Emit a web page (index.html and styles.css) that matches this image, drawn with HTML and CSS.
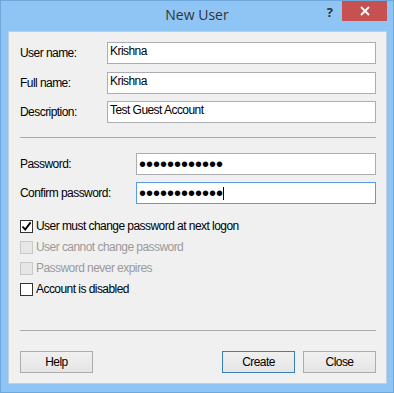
FILE: index.html
```html
<!DOCTYPE html>
<html>
<head>
<meta charset="utf-8">
<title>New User</title>
<link rel="stylesheet" href="styles.css">
</head>
<body>
<div class="window">
  <div class="titlebar">
    <div class="tb-spacer"></div>
    <div class="title">New User</div>
    <div class="controls">
      <span class="help-glyph">?</span>
      <span class="close-btn">
        <svg width="10" height="10" viewBox="0 0 10 10"><path d="M1 1 L9 9 M9 1 L1 9" stroke="#fff" stroke-width="1.8" fill="none"/></svg>
      </span>
    </div>
  </div>
  <div class="client">
    <div class="fields">
      <div class="row row-first">
        <span class="label">User name:</span>
        <div class="input">Krishna</div>
      </div>
      <div class="row">
        <span class="label">Full name:</span>
        <div class="input">Krishna</div>
      </div>
      <div class="row">
        <span class="label">Description:</span>
        <div class="input">Test Guest Account</div>
      </div>
    </div>
    <div class="sep sep-top"></div>
    <div class="pw-fields">
      <div class="row pw-row">
        <span class="label">Password:</span>
        <div class="input pw-input"><span class="dots">••••••••••••</span></div>
      </div>
      <div class="row pw-row">
        <span class="label">Confirm password:</span>
        <div class="input pw-input focused"><span class="dots">••••••••••••</span><span class="caret"></span></div>
      </div>
    </div>
    <div class="checks">
      <div class="check">
        <span class="box checked">
          <svg width="11" height="11" viewBox="0 0 11 11"><path d="M1.5 5.5 L4.2 8.6 L9.6 1.4" stroke="#000" stroke-width="1.9" fill="none"/></svg>
        </span>
        <span class="check-label">User must change password at next logon</span>
      </div>
      <div class="check disabled">
        <span class="box"></span>
        <span class="check-label">User cannot change password</span>
      </div>
      <div class="check disabled">
        <span class="box"></span>
        <span class="check-label">Password never expires</span>
      </div>
      <div class="check">
        <span class="box"></span>
        <span class="check-label">Account is disabled</span>
      </div>
    </div>
    <div class="sep sep-bottom"></div>
    <div class="buttons">
      <button class="btn">Help</button>
      <span class="btn-spacer"></span>
      <button class="btn default">Create</button>
      <button class="btn">Close</button>
    </div>
  </div>
</div>
</body>
</html>
```
FILE: styles.css
```css
html, body {
  margin: 0;
  padding: 0;
}
body {
  width: 394px;
  height: 393px;
  background: #8ec5f5;
  font-family: "Liberation Sans Narrow", "Arial Narrow", "Liberation Sans", Arial, sans-serif;
  font-size: 12px;
  letter-spacing: -0.55px;
  color: #000;
  overflow: hidden;
}
.window {
  box-sizing: border-box;
  width: 394px;
  height: 393px;
  border: 1px solid #6fa8dc;
  background: #8ec5f5;
  display: flex;
  flex-direction: column;
}
.titlebar {
  height: 30px;
  display: grid;
  grid-template-columns: 1fr auto 1fr;
  align-items: start;
  letter-spacing: 0;
}
.title {
  font-family: "Open Sans", "Noto Sans", sans-serif;
  font-size: 14px;
  line-height: 28px;
  color: #333;
}
.controls {
  justify-self: end;
  display: flex;
  align-items: flex-start;
  margin-right: 6px;
}
.help-glyph {
  font-family: "Open Sans", "Noto Sans", sans-serif;
  font-weight: 700;
  font-size: 13px;
  line-height: 18px;
  color: #333;
  margin-right: 9px;
  padding-top: 2px;
}
.close-btn {
  width: 45px;
  height: 20px;
  background: #c75050;
  display: flex;
  align-items: center;
  justify-content: center;
}
.client {
  flex: 1;
  margin: 0 6px 8px 7px;
  border: 1px solid #c3cfdb;
  background: #f0f0f0;
  padding: 10px 10px 0 11px;
  display: flex;
  flex-direction: column;
}
.fields {
  display: flex;
  flex-direction: column;
  gap: 7px;
}
.row {
  display: grid;
  grid-template-columns: 87px 1fr;
  align-items: center;
  height: 22px;
}
.row-first {
  margin-bottom: 1px;
}
.label {
  line-height: 15px;
}
.input {
  box-sizing: border-box;
  height: 22px;
  background: #fff;
  border: 1px solid #abadb3;
  padding: 1px 0 0 2px;
  line-height: 15px;
  white-space: nowrap;
}
.sep {
  height: 0;
  border-top: 1px solid #a9a9a9;
}
.sep-top {
  margin-top: 14px;
}
.pw-fields {
  margin-top: 15px;
  display: flex;
  flex-direction: column;
  gap: 7px;
}
.pw-row {
  grid-template-columns: 116px 1fr;
}
.pw-input {
  display: flex;
  align-items: center;
  padding: 0 0 0 2px;
}
.dots {
  font-family: "Liberation Sans", Arial, sans-serif;
  font-size: 20px;
  letter-spacing: 0;
  line-height: 20px;
  height: 20px;
}
.focused {
  border-color: #569de5;
}
.caret {
  width: 1px;
  height: 13px;
  background: #000;
}
.checks {
  margin-top: 12px;
  display: flex;
  flex-direction: column;
}
.check {
  height: 21px;
  display: flex;
  align-items: center;
  gap: 3px;
}
.box {
  box-sizing: border-box;
  width: 13px;
  height: 13px;
  border: 1px solid #333;
  background: #fff;
  display: flex;
  align-items: center;
  justify-content: center;
}
.check-label {
  line-height: 15px;
}
.disabled .box {
  border-color: #c8c8c8;
  background: #e6e6e6;
}
.disabled .check-label {
  color: #9a9a9a;
}
.sep-bottom {
  margin-top: 30px;
}
.buttons {
  margin-top: 20px;
  display: flex;
  gap: 8px;
}
.btn-spacer {
  flex: 1;
}
.btn {
  box-sizing: border-box;
  width: 73px;
  height: 22px;
  border: 1px solid #acacac;
  background: linear-gradient(#f0f0f0, #e5e5e5);
  font-family: inherit;
  font-size: 12px;
  letter-spacing: -0.55px;
  color: #000;
  padding: 0;
  margin: 0;
  line-height: 15px;
}
.btn.default {
  border-color: #3c7fb1;
}
```
